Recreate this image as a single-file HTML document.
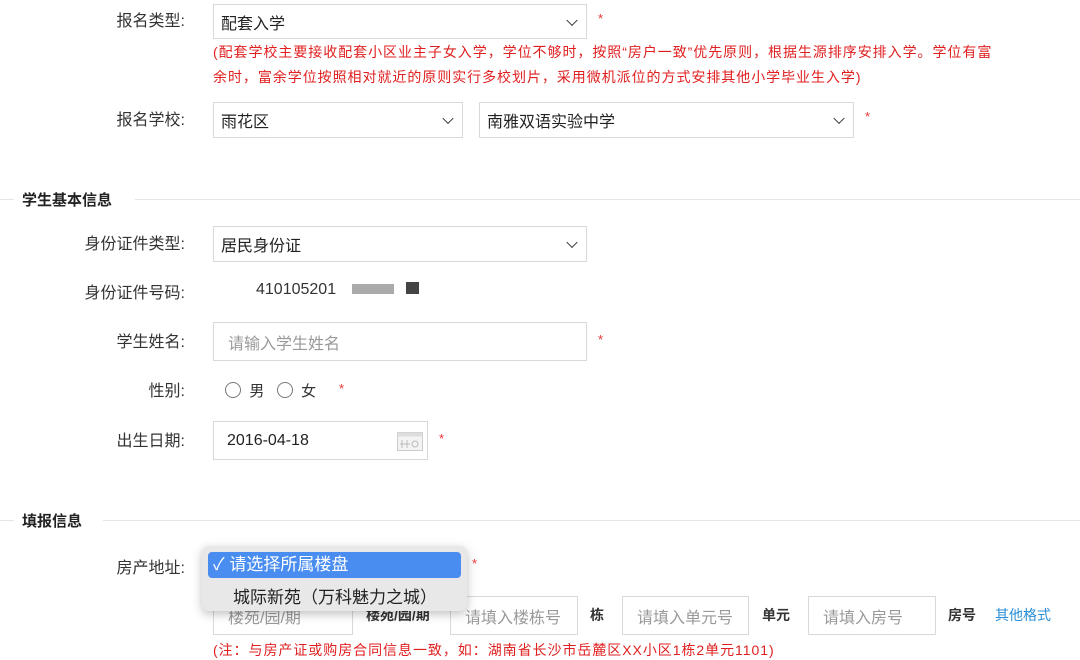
<!DOCTYPE html>
<html><head><meta charset="utf-8"><style>
body{margin:0;width:1080px;height:647px;overflow:hidden;background:#fff;font-family:"Liberation Sans","Noto Sans CJK SC",sans-serif;font-size:16px;color:#333;position:relative}
.a{position:absolute;white-space:nowrap}
.lbl{position:absolute;text-align:right;width:185px;left:0;font-size:16px;color:#333}
.box{position:absolute;border:1px solid #d9d9d9;background:#fff;box-sizing:border-box;font-size:16px;color:#222;padding-left:7px;display:flex;align-items:center}
.ph{color:#999}
.chev{position:absolute;right:10px;top:50%;width:7px;height:7px;border-right:1.5px solid #333;border-bottom:1.5px solid #333;transform:translateY(-70%) rotate(45deg)}
.star{position:absolute;color:#e33;font-size:13px}
.red{position:absolute;color:#e02020;font-size:14px;letter-spacing:0.95px;white-space:nowrap}
.sec{position:absolute;font-weight:bold;font-size:15px;color:#222}
.line{position:absolute;height:1px;background:#e5e5e5}
.rad{display:inline-block;width:14px;height:14px;border:1px solid #777;border-radius:50%;vertical-align:-2px}
</style></head><body>
<div class="lbl" style="top:7px">报名类型:</div>
<div class="box" style="left:213px;top:4px;width:374px;height:35px">配套入学<i class="chev"></i></div>
<div class="star" style="left:598px;top:11px">*</div>
<div class="red" style="left:213px;top:42px">(配套学校主要接收配套小区业主子女入学，学位不够时，按照“房户一致”优先原则，根据生源排序安排入学。学位有富</div>
<div class="red" style="left:213px;top:67px">余时，富余学位按照相对就近的原则实行多校划片，采用微机派位的方式安排其他小学毕业生入学)</div>
<div class="lbl" style="top:106px">报名学校:</div>
<div class="box" style="left:213px;top:102px;width:250px;height:36px">雨花区<i class="chev"></i></div>
<div class="box" style="left:479px;top:102px;width:375px;height:36px">南雅双语实验中学<i class="chev"></i></div>
<div class="star" style="left:865px;top:109px">*</div>

<div class="line" style="left:0;width:14px;top:199px"></div>
<div class="sec" style="left:22px;top:189px">学生基本信息</div>
<div class="line" style="left:135px;right:0;top:199px"></div>

<div class="lbl" style="top:230px">身份证件类型:</div>
<div class="box" style="left:213px;top:226px;width:374px;height:36px">居民身份证<i class="chev"></i></div>
<div class="lbl" style="top:279px">身份证件号码:</div>
<div class="a" style="left:256px;top:281px">410105201<span style="display:inline-block;width:6px"></span><span style="display:inline-block;width:42px;height:10px;background:#aaa;margin-left:10px"></span><span style="display:inline-block;width:13px;height:12px;background:#444;margin-left:12px"></span></div>
<div class="lbl" style="top:328px">学生姓名:</div>
<div class="box" style="left:213px;top:322px;width:374px;height:39px;padding-left:14px"><span class="ph">请输入学生姓名</span></div>
<div class="star" style="left:598px;top:332px">*</div>
<div class="lbl" style="top:377px">性别:</div>
<div class="a" style="left:225px;top:380px;font-size:15px"><span class="rad"></span>&nbsp; 男 &nbsp;&nbsp;<span class="rad"></span>&nbsp; 女</div>
<div class="star" style="left:339px;top:381px">*</div>
<div class="lbl" style="top:427px">出生日期:</div>
<div class="box" style="left:213px;top:421px;width:215px;height:39px;padding-left:13px">2016-04-18
<svg style="position:absolute;left:183px;top:10px" width="26" height="19"><rect x="0.5" y="0.5" width="25" height="18" fill="#f3f3f3" stroke="#ccc"/><rect x="0.5" y="0.5" width="25" height="4" fill="#ddd"/><line x1="5" y1="8" x2="5" y2="16" stroke="#bbb"/><line x1="10" y1="8" x2="10" y2="16" stroke="#bbb"/><line x1="3" y1="12" x2="13" y2="12" stroke="#bbb"/><circle cx="18" cy="12" r="3" fill="none" stroke="#bbb"/></svg></div>
<div class="star" style="left:439px;top:431px">*</div>

<div class="line" style="left:0;width:14px;top:520px"></div>
<div class="sec" style="left:22px;top:510px">填报信息</div>
<div class="line" style="left:103px;right:0;top:520px"></div>

<div class="lbl" style="top:554px">房产地址:</div>
<div class="star" style="left:472px;top:556px">*</div>
<div class="box" style="left:213px;top:596px;width:140px;height:39px;padding-left:14px"><span class="ph">楼苑/园/期</span></div>
<div class="a" style="left:366px;top:605px;font-size:14px;font-weight:bold;color:#333">楼苑/园/期</div>
<div class="box" style="left:450px;top:596px;width:128px;height:39px;padding-left:14px"><span class="ph">请填入楼栋号</span></div>
<div class="a" style="left:590px;top:605px;font-size:14px;font-weight:bold">栋</div>
<div class="box" style="left:622px;top:596px;width:127px;height:39px;padding-left:14px"><span class="ph">请填入单元号</span></div>
<div class="a" style="left:762px;top:605px;font-size:14px;font-weight:bold">单元</div>
<div class="box" style="left:808px;top:596px;width:128px;height:39px;padding-left:14px"><span class="ph">请填入房号</span></div>
<div class="a" style="left:948px;top:605px;font-size:14px;font-weight:bold">房号</div>
<div class="a" style="left:995px;top:605px;font-size:14px;color:#2a8fd6">其他格式</div>
<div class="red" style="left:213px;top:640px">(注：与房产证或购房合同信息一致，如：湖南省长沙市岳麓区XX小区1栋2单元1101)</div>

<div class="a" style="left:202px;top:546px;width:265px;height:65px;background:#e8e8e8;border-radius:7px;box-shadow:0 3px 10px rgba(0,0,0,.25)">
<div class="a" style="left:6px;top:6px;width:253px;height:26px;background:#4a8df0;border-radius:4px;color:#fff;font-size:17px;line-height:26px;padding-left:5px;box-sizing:border-box">✓ 请选择所属楼盘</div>
<div class="a" style="left:31px;top:37px;font-size:17px;color:#222">城际新苑（万科魅力之城）</div>
</div>
</body></html>
